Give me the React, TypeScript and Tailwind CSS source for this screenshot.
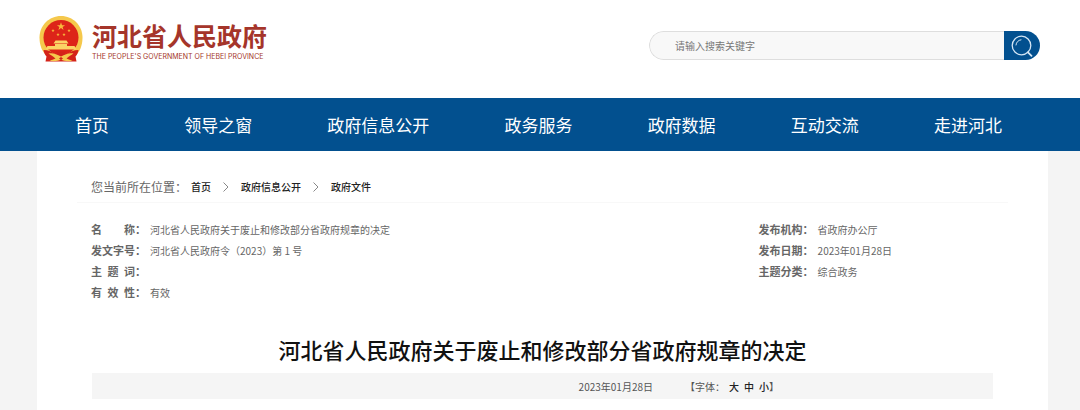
import { useState } from 'react';

const navItems = ['首页', '领导之窗', '政府信息公开', '政务服务', '政府数据', '互动交流', '走进河北'];

const crumbs = ['首页', '政府信息公开', '政府文件'];

const leftMeta = [
  { label: '名 称', value: '河北省人民政府关于废止和修改部分省政府规章的决定' },
  { label: '发文字号', value: '河北省人民政府令（2023）第 1 号' },
  { label: '主 题 词', value: '' },
  { label: '有 效 性', value: '有效' },
];

const rightMeta = [
  { label: '发布机构', value: '省政府办公厅' },
  { label: '发布日期', value: '2023年01月28日' },
  { label: '主题分类', value: '综合政务' },
];

const STAR = 'M0-5 1.2-1.6H4.8L1.9.6 3 4 0 1.9-3 4-1.9.6-4.8-1.6H-1.2Z';

function Emblem() {
  return (
    <svg viewBox="0 0 88 94" className="h-12 w-11 shrink-0" aria-hidden="true">
      {/* Wheat ring */}
      <path d="M44 1C20 1 1 20 1 44c0 17 6 29 14 36h58c8-7 14-19 14-36C87 20 68 1 44 1Z" fill="#f5c84c" />
      <circle cx="44" cy="44" r="35" fill="#dd2419" />
      {/* Stars */}
      <g fill="#f8b93c">
        <path d={STAR} transform="translate(44 22) scale(1.7)" />
        <path d={STAR} transform="translate(28 30) scale(.7)" />
        <path d={STAR} transform="translate(60 30) scale(.7)" />
        <path d={STAR} transform="translate(38 38) scale(.7)" />
        <path d={STAR} transform="translate(50 38) scale(.7)" />
      </g>
      {/* Gate */}
      <path d="M33 50h22l4 6H29ZM32 57h24v4h15l4 7H13l4-7h15Z" fill="#fbd365" />
      {/* Ribbon and gear */}
      <path d="M9 69c10 0 17 4 23 8h24c6-4 13-8 23-8-1 6-3 10-6 13l2 10H13l2-10c-3-3-5-7-6-13Z" fill="#d4231a" />
      <path d="M19 76c8-2 16 1 25 6 9-5 17-8 25-6-5 3-9 6-14 10 4 2 8 3 12 4-8 3-17 1-23-2-6 3-15 5-23 2 4-1 8-2 12-4-5-4-9-7-14-10Z" fill="#f5c84c" />
      <path d="M34 72h20l-4 6H38ZM40 86l4-3 4 3-4 3Z" fill="#d4231a" />
    </svg>
  );
}

function SearchIcon() {
  return (
    <svg viewBox="0 0 22 22" className="size-[22px]" fill="none" stroke="#d3e5f4" strokeWidth="1.3" strokeLinecap="round" aria-hidden="true">
      <circle cx="10.5" cy="10.5" r="9.3" />
      <path d="M5 10a6 6 0 0 1 5-5.2" strokeWidth="1" />
      <path d="m17 17.300 3.500 3.500" strokeWidth="1.800" />
    </svg>
  );
}

function MetaList({ items }: { items: { label: string; value: string }[] }) {
  return (
    <dl>
      {items.map((item) => (
        <div key={item.label} className="flex h-[21px] items-center">
          <dt className="flex text-[11px] font-bold text-[#666]">
            <span className="w-11 [text-align-last:justify]">{item.label}</span>：
          </dt>
          <dd className="ml-1 text-[10px] text-[#666]">{item.value}</dd>
        </div>
      ))}
    </dl>
  );
}

export default function App() {
  const [keyword, setKeyword] = useState('');

  return (
    <div className="flex min-h-screen flex-col bg-[#f4f4f4] font-['Noto_Sans_CJK_SC','Liberation_Sans',sans-serif]">
      <header className="flex h-[98px] items-start justify-between bg-white pt-[15px] pr-10 pl-[39px]">
        <a href="#" className="flex items-start gap-[9px] text-[#a5352a]">
          <Emblem />
          <span className="block pt-1">
            <span className="block text-[25px] leading-8 font-bold">河北省人民政府</span>
            <span className="block font-['Inter',sans-serif] text-[7px] leading-3 whitespace-nowrap">
              THE PEOPLE'S GOVERNMENT OF HEBEI PROVINCE
            </span>
          </span>
        </a>

        <form onSubmit={(e) => e.preventDefault()} className="mt-4 flex h-[29px] w-[391px] overflow-hidden rounded-full">
          <input
            type="text"
            aria-label="请输入搜索关键字"
            placeholder="请输入搜索关键字"
            value={keyword}
            onChange={(e) => setKeyword(e.target.value)}
            className="min-w-0 flex-1 rounded-l-full border border-r-0 border-[#dedede] bg-[#f8f8f8] pl-[25px] text-[10px] text-[#666] outline-none placeholder:text-[#777]"
          />
          <button type="submit" aria-label="搜索" className="flex w-9 items-center justify-center bg-[#02508f]">
            <SearchIcon />
          </button>
        </form>
      </header>

      <nav className="flex h-[53px] items-center justify-between bg-[#02508f] pr-[78px] pl-[75px]">
        {navItems.map((item) => (
          <a key={item} href="#" className="text-[17px] text-white">
            {item}
          </a>
        ))}
      </nav>

      <main className="mr-8 ml-[37px] flex-1 bg-white px-10 pb-[11px]">
        <div className="flex h-[52px] items-center border-b border-[#f8f8f8] px-[14px] pt-5">
          <span className="text-[12px] text-[#666]">您当前所在位置：</span>
          {crumbs.map((crumb, i) => (
            <span key={crumb} className="flex items-center">
              {i > 0 && (
                <svg viewBox="0 0 6 10" className="mx-3 h-[10px] w-[6px]" fill="none" stroke="#888" aria-hidden="true">
                  <path d="m.5.5 4.500 4.500-4.500 4.500" />
                </svg>
              )}
              <a href="#" className={i > 0 ? 'text-[10px] font-medium text-[#222]' : 'ml-1 text-[10px] font-medium text-[#222]'}>
                {crumb}
              </a>
            </span>
          ))}
        </div>

        <div className="flex justify-between pt-4 pr-[116px] pl-[14px]">
          <MetaList items={leftMeta} />
          <MetaList items={rightMeta} />
        </div>

        <h1 className="mt-[26px] text-center text-[22px] leading-10 font-medium text-[#111]">
          河北省人民政府关于废止和修改部分省政府规章的决定
        </h1>

        <div className="mx-[15px] mt-1 flex h-[26px] items-center justify-end gap-8 bg-[#f5f5f5] pr-[214px] text-[10px] text-[#555]">
          <time dateTime="2023-01-28">2023年01月28日</time>
          <div className="flex items-center">
            <span>【字体：</span>
            <div className="ml-1 flex gap-[5px] font-medium text-[#222]">
              <button type="button">大</button>
              <button type="button">中</button>
              <button type="button">小</button>
            </div>
            <span>】</span>
          </div>
        </div>
      </main>
    </div>
  );
}
